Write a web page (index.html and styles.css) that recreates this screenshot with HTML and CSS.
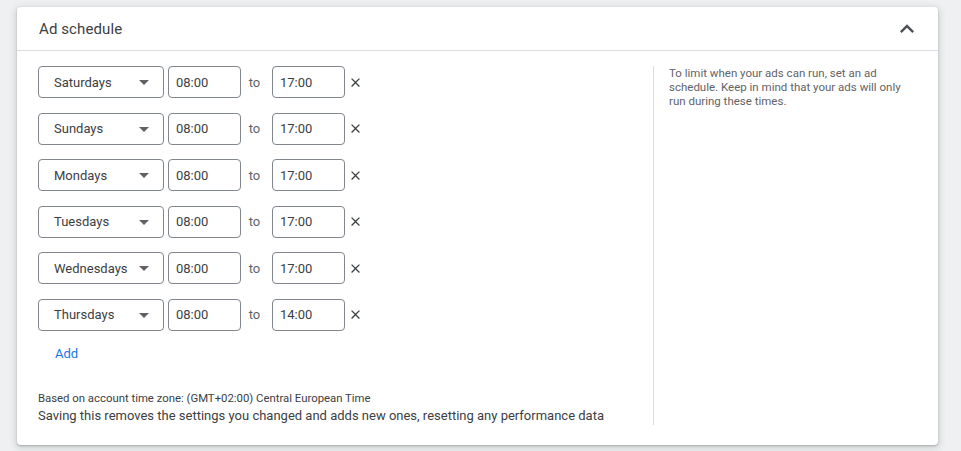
FILE: index.html
```html
<!DOCTYPE html>
<html lang="en">
<head>
<meta charset="utf-8">
<title>Ad schedule</title>
<link rel="stylesheet" href="styles.css">
</head>
<body>
<section class="card">
  <header class="card-header">
    <h2 class="title">Ad schedule</h2>
    <svg class="chevron" width="28" height="28" viewBox="0 0 24 24"><path d="M12 8l-6 6 1.41 1.41L12 10.83l4.59 4.58L18 14z" fill="#4d5156"/></svg>
  </header>
  <div class="card-body">
    <div class="main">
      <div class="rows">
        <div class="row">
          <div class="select"><span>Saturdays</span><svg class="drop" width="24" height="24" viewBox="0 0 24 24"><path d="M7 10l5 5 5-5z" fill="#5f6368"/></svg></div>
          <div class="time">08:00</div><span class="to">to</span><div class="time">17:00</div>
          <svg class="close" width="15" height="15" viewBox="0 0 24 24"><path d="M19 6.41L17.59 5 12 10.59 6.41 5 5 6.41 10.59 12 5 17.59 6.41 19 12 13.41 17.59 19 19 17.59 13.41 12z" fill="#3c4043"/></svg>
        </div>
        <div class="row">
          <div class="select"><span>Sundays</span><svg class="drop" width="24" height="24" viewBox="0 0 24 24"><path d="M7 10l5 5 5-5z" fill="#5f6368"/></svg></div>
          <div class="time">08:00</div><span class="to">to</span><div class="time">17:00</div>
          <svg class="close" width="15" height="15" viewBox="0 0 24 24"><path d="M19 6.41L17.59 5 12 10.59 6.41 5 5 6.41 10.59 12 5 17.59 6.41 19 12 13.41 17.59 19 19 17.59 13.41 12z" fill="#3c4043"/></svg>
        </div>
        <div class="row">
          <div class="select"><span>Mondays</span><svg class="drop" width="24" height="24" viewBox="0 0 24 24"><path d="M7 10l5 5 5-5z" fill="#5f6368"/></svg></div>
          <div class="time">08:00</div><span class="to">to</span><div class="time">17:00</div>
          <svg class="close" width="15" height="15" viewBox="0 0 24 24"><path d="M19 6.41L17.59 5 12 10.59 6.41 5 5 6.41 10.59 12 5 17.59 6.41 19 12 13.41 17.59 19 19 17.59 13.41 12z" fill="#3c4043"/></svg>
        </div>
        <div class="row">
          <div class="select"><span>Tuesdays</span><svg class="drop" width="24" height="24" viewBox="0 0 24 24"><path d="M7 10l5 5 5-5z" fill="#5f6368"/></svg></div>
          <div class="time">08:00</div><span class="to">to</span><div class="time">17:00</div>
          <svg class="close" width="15" height="15" viewBox="0 0 24 24"><path d="M19 6.41L17.59 5 12 10.59 6.41 5 5 6.41 10.59 12 5 17.59 6.41 19 12 13.41 17.59 19 19 17.59 13.41 12z" fill="#3c4043"/></svg>
        </div>
        <div class="row">
          <div class="select"><span>Wednesdays</span><svg class="drop" width="24" height="24" viewBox="0 0 24 24"><path d="M7 10l5 5 5-5z" fill="#5f6368"/></svg></div>
          <div class="time">08:00</div><span class="to">to</span><div class="time">17:00</div>
          <svg class="close" width="15" height="15" viewBox="0 0 24 24"><path d="M19 6.41L17.59 5 12 10.59 6.41 5 5 6.41 10.59 12 5 17.59 6.41 19 12 13.41 17.59 19 19 17.59 13.41 12z" fill="#3c4043"/></svg>
        </div>
        <div class="row">
          <div class="select"><span>Thursdays</span><svg class="drop" width="24" height="24" viewBox="0 0 24 24"><path d="M7 10l5 5 5-5z" fill="#5f6368"/></svg></div>
          <div class="time">08:00</div><span class="to">to</span><div class="time">14:00</div>
          <svg class="close" width="15" height="15" viewBox="0 0 24 24"><path d="M19 6.41L17.59 5 12 10.59 6.41 5 5 6.41 10.59 12 5 17.59 6.41 19 12 13.41 17.59 19 19 17.59 13.41 12z" fill="#3c4043"/></svg>
        </div>
      </div>
      <button class="add">Add</button>
      <div class="footer">
        <p class="tz">Based on account time zone: (GMT+02:00) Central European Time</p>
        <p class="warn">Saving this removes the settings you changed and adds new ones, resetting any performance data</p>
      </div>
    </div>
    <aside class="side">
      <p>To limit when your ads can run, set an ad schedule. Keep in mind that your ads will only run during these times.</p>
    </aside>
  </div>
</section>
</body>
</html>
```
FILE: styles.css
```css
html, body {
  margin: 0;
  padding: 0;
}
body {
  background: #eef0f1;
  font-family: Roboto, "Liberation Sans", Arial, sans-serif;
  color: #3c4043;
  padding: 7px 23px 0 17px;
  height: 451px;
  box-sizing: border-box;
  overflow: hidden;
}
.card {
  width: 921px;
  background: #fff;
  border-radius: 4px;
  box-shadow: 0 1px 2px rgba(60,64,67,.3), 0 2px 6px 2px rgba(60,64,67,.15);
}
.card-header {
  height: 43px;
  border-bottom: 1px solid #dadce0;
  display: flex;
  align-items: center;
  justify-content: space-between;
  padding: 0 17px 0 22px;
}
.title {
  margin: 0;
  font-size: 15px;
  font-weight: 400;
  color: #3c4043;
  letter-spacing: 0.1px;
}
.chevron {
  display: block;
}
.card-body {
  display: flex;
  padding: 15px 0 20px 21px;
}
.main {
  width: 615px;
  display: flex;
  flex-direction: column;
}
.rows {
  display: flex;
  flex-direction: column;
  gap: 14.6px;
}
.row {
  display: flex;
  align-items: center;
  height: 32px;
}
.select {
  width: 126px;
  height: 32px;
  box-sizing: border-box;
  border: 1px solid #80868b;
  border-radius: 4px;
  display: flex;
  align-items: center;
  justify-content: space-between;
  padding: 0 7px 0 15px;
  font-size: 13px;
}
.drop {
  display: block;
}
.time {
  width: 73px;
  height: 32px;
  box-sizing: border-box;
  border: 1px solid #80868b;
  border-radius: 4px;
  margin-left: 4px;
  padding-left: 7px;
  display: flex;
  align-items: center;
  font-size: 13px;
}
.to {
  font-size: 13px;
  color: #5f6368;
  width: 27px;
  text-align: center;
}
.close {
  display: block;
  margin-left: 3px;
}
.add {
  align-self: flex-start;
  margin-top: 5px;
  border: 0;
  background: none;
  font-family: inherit;
  font-size: 13px;
  font-weight: 400;
  color: #1a73e8;
  padding: 8px 17px;
  line-height: 20px;
}
.footer {
  margin-top: 18px;
}
.footer p {
  margin: 0;
}
.tz {
  font-size: 11.35px;
  line-height: 16px;
  color: #3c4043;
}
.warn {
  font-size: 13px;
  line-height: 19px;
  color: #3c4043;
}
.side {
  border-left: 1px solid #dadce0;
  padding-left: 15px;
  width: 235px;
}
.side p {
  margin: 0;
  font-size: 11.5px;
  line-height: 14px;
  color: #5f6368;
}
```
